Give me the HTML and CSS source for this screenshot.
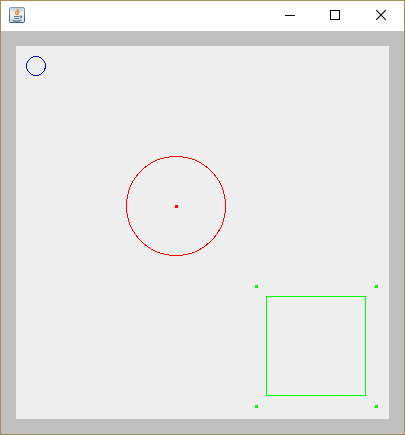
FILE: index.html
```html
<!DOCTYPE html>
<html lang="en">
<head>
<meta charset="utf-8">
<title>Shapes</title>
<link rel="stylesheet" href="styles.css">
</head>
<body>
<div class="window">
  <header class="titlebar">
    <svg class="app-icon" width="16" height="16" viewBox="0 0 16 16">
      <defs>
        <linearGradient id="tile" x1="0" y1="0" x2="0" y2="1">
          <stop offset="0" stop-color="#b9c9d4"/>
          <stop offset=".35" stop-color="#f0f3f5"/>
          <stop offset="1" stop-color="#d3dde4"/>
        </linearGradient>
        <linearGradient id="edge" x1="0" y1="0" x2="0" y2="1">
          <stop offset="0" stop-color="#8399a9"/>
          <stop offset="1" stop-color="#355a76"/>
        </linearGradient>
      </defs>
      <rect x=".5" y=".5" width="15" height="15" rx="1" fill="url(#tile)" stroke="url(#edge)"/>
      <path d="M9.3 2C9.5 4 6 4.500 6.500 6.200C6.700 7 7.600 7.300 7.700 8M10.600 4.600C8.500 5.300 8.200 6 9 6.800C9.300 7.200 9 7.700 8.600 8" fill="none" stroke="#e5812e" stroke-width="1.300"/>
      <path d="M5 9.500H10.500M5.500 11.500H10M11 9C13.300 8.700 13 10.800 11 11M3.500 13.400C6 14.200 10 14.200 12.300 13" fill="none" stroke="#4b7898" stroke-width="1.200"/>
    </svg>
    <div class="controls">
      <svg width="46" height="30" viewBox="0 0 46 30"><path class="control-line" d="M19 14.500H29"/></svg>
      <svg width="46" height="30" viewBox="0 0 46 30"><rect class="control-line" x="18.500" y="9.500" width="9" height="9"/></svg>
      <svg width="46" height="30" viewBox="0 0 46 30"><path class="control-cross" d="M18.200 9.200L27.800 18.800M27.800 9.200L18.200 18.800"/></svg>
    </div>
  </header>
  <main class="frame">
    <svg class="canvas" width="373" height="373" viewBox="0 0 373 373">
      <circle class="blue" cx="20" cy="20" r="9.500"/>
      <circle class="red" cx="160" cy="160" r="49.500"/>
      <rect class="red-dot" x="159" y="159" width="3" height="3"/>
      <rect class="green" x="250.500" y="250.500" width="99" height="99"/>
      <rect class="green-dot" x="239" y="239" width="3" height="3"/>
      <rect class="green-dot" x="359" y="239" width="3" height="3"/>
      <rect class="green-dot" x="239" y="359" width="3" height="3"/>
      <rect class="green-dot" x="359" y="359" width="3" height="3"/>
    </svg>
  </main>
</div>
</body>
</html>
```
FILE: styles.css
```css
* {
  box-sizing: border-box;
}

body {
  margin: 0;
}

.window {
  display: flex;
  flex-direction: column;
  width: 405px;
  height: 435px;
  border: 1px solid #a58d56;
  border-bottom-color: #978a56;
  background: #fff;
}

.titlebar {
  display: flex;
  justify-content: space-between;
  height: 30px;
  padding-left: 8px;
}

.app-icon {
  margin-top: 6px;
}

.controls {
  display: flex;
}

.control-line {
  fill: none;
  stroke: #000;
  shape-rendering: crispEdges;
}

.control-cross {
  fill: none;
  stroke: #000;
  stroke-width: 1.1;
}

.frame {
  flex: 1;
  padding: 15px;
  background: #c0c0c0;
}

.canvas {
  display: block;
  background: #eee;
  fill: none;
  shape-rendering: crispEdges;
}

.blue {
  stroke: #00f;
}

.red {
  stroke: #f00;
}

.green {
  stroke: #0f0;
}

.red-dot {
  fill: #f00;
}

.green-dot {
  fill: #0f0;
}
```
